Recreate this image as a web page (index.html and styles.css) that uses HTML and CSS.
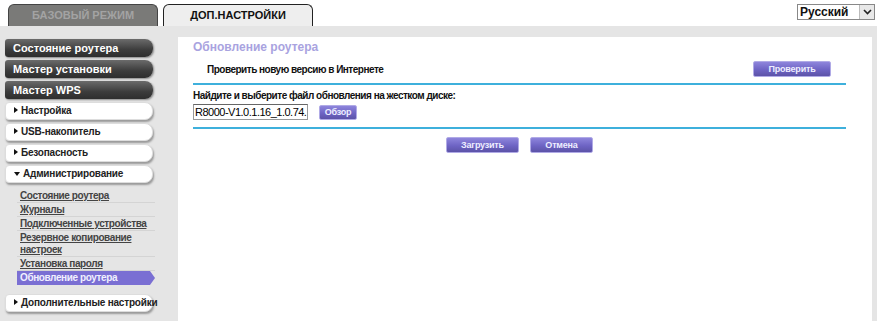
FILE: index.html
```html
<!DOCTYPE html>
<html lang="ru">
<head>
  <meta charset="UTF-8" />
  <title>Обновление роутера</title>
  <link rel="stylesheet" href="styles.css">
</head>
<body>
  <div class="topbar">
    <div class="tabs">
      <div class="tab tab-basic">БАЗОВЫЙ РЕЖИМ</div>
      <div class="tab tab-adv">ДОП.НАСТРОЙКИ</div>
    </div>
    <div class="lang">
      <span class="lang-text">Русский</span>
      <span class="lang-arrow">
        <svg width="9" height="6" viewBox="0 0 9 6"><path d="M1 1 L4.5 4.5 L8 1" fill="none" stroke="#222" stroke-width="1.6"/></svg>
      </span>
    </div>
  </div>

  <div class="main">
    <div class="sidebar">
      <a class="nav-dark">Состояние роутера</a>
      <a class="nav-dark">Мастер установки</a>
      <a class="nav-dark">Мастер WPS</a>
      <a class="nav-light closed">Настройка</a>
      <a class="nav-light closed">USB-накопитель</a>
      <a class="nav-light closed">Безопасность</a>
      <a class="nav-light open">Администрирование</a>

      <ul class="submenu">
        <li><a>Состояние роутера</a></li>
        <li><a>Журналы</a></li>
        <li><a>Подключенные устройства</a></li>
        <li class="two-line"><a>Резервное копирование<br>настроек</a></li>
        <li><a>Установка пароля</a></li>
        <li class="active"><a>Обновление роутера</a></li>
      </ul>

      <a class="nav-light closed extra">Дополнительные настройки</a>
    </div>

    <div class="content">
      <h4 class="title">Обновление роутера</h4>

      <div class="row check-row">
        <span class="check-text">Проверить новую версию в Интернете</span>
        <button class="btn btn-check">Проверить</button>
      </div>

      <div class="row file-row">
        <label class="form-label">Найдите и выберите файл обновления на жестком диске:</label>
        <div class="file-line">
          <div class="file-input">R8000-V1.0.1.16_1.0.74.</div>
          <button class="btn btn-browse">Обзор</button>
        </div>
      </div>

      <div class="actions">
        <button class="btn btn-upload">Загрузить</button>
        <button class="btn btn-cancel">Отмена</button>
      </div>
    </div>
  </div>
</body>
</html>
```

FILE: styles.css
```css
* {
  box-sizing: border-box;
  margin: 0;
  padding: 0;
  font-family: "Liberation Sans", Arial, sans-serif;
}

body {
  background: #fff;
  height: 100vh;
  display: flex;
  flex-direction: column;
  overflow: hidden;
}

/* top tabs */
.topbar {
  height: 26px;
  display: flex;
  justify-content: space-between;
  background: #fff;
}

.tabs {
  display: flex;
  align-items: flex-end;
  gap: 5px;
  padding-left: 8px;
}

.tab {
  width: 150px;
  height: 22px;
  border-radius: 6px 6px 0 0;
  font-size: 11px;
  font-weight: bold;
  text-align: center;
  line-height: 21px;
}

.tab-basic {
  background: #7a7a78;
  border: 1px solid #444;
  border-bottom: none;
  color: #a3a3a3;
}

.tab-adv {
  background: #eeeeee;
  border: 1px solid #222;
  border-bottom: none;
  color: #111;
}

.lang {
  margin: 4px 2px 0 0;
  width: 78px;
  height: 16px;
  border: 1px solid #888;
  display: flex;
  align-items: center;
  justify-content: space-between;
  background: #fff;
}

.lang-text {
  font-size: 12px;
  font-weight: bold;
  padding-left: 2px;
  color: #111;
}

.lang-arrow {
  width: 15px;
  height: 14px;
  background: #e8e8e8;
  border-left: 1px solid #bbb;
  display: flex;
  align-items: center;
  justify-content: center;
}

/* main area */
.main {
  flex: 1;
  display: flex;
  background: #e5e5e5;
}

.sidebar {
  width: 178px;
  flex-shrink: 0;
  padding: 13px 0 0 5px;
}

.nav-dark,
.nav-light {
  display: block;
  width: 148px;
  height: 18px;
  margin-bottom: 3px;
  font-weight: bold;
  line-height: 18px;
  white-space: nowrap;
  cursor: pointer;
}

.nav-dark {
  background: linear-gradient(#6b6b6b, #3c3c3c 60%, #2e2e2e);
  color: #fff;
  font-size: 11px;
  padding-left: 8px;
  border-radius: 3px 8px 8px 3px;
  box-shadow: 1px 1px 2px #888;
}

.nav-light {
  background: #fff;
  color: #222;
  font-size: 10px;
  letter-spacing: -0.2px;
  padding-left: 8px;
  border-radius: 4px 8px 8px 4px;
  box-shadow: 1px 2px 2px #999;
  border: 1px solid #ddd;
  line-height: 16px;
}

.nav-light::before {
  content: "";
  display: inline-block;
  margin-right: 3px;
  vertical-align: 1px;
}

.closed::before {
  border-left: 4px solid #111;
  border-top: 3px solid transparent;
  border-bottom: 3px solid transparent;
}

.open::before {
  border-top: 4px solid #111;
  border-left: 3px solid transparent;
  border-right: 3px solid transparent;
}

.submenu {
  list-style: none;
  margin: 6px 0 0 12px;
  width: 138px;
}

.submenu li {
  border-bottom: 1px solid #d4d4d4;
  padding: 1px 0 0 3px;
  font-size: 10px;
  font-weight: bold;
  letter-spacing: -0.4px;
  line-height: 12px;
  height: 14px;
  white-space: nowrap;
}

.submenu li.two-line {
  height: 26px;
}

.submenu a {
  color: #444;
  text-decoration: underline;
}

.submenu li.active {
  background: #7a6fd3;
  border-bottom: none;
  clip-path: polygon(0 0, calc(100% - 5px) 0, 100% 50%, calc(100% - 5px) 100%, 0 100%);
}

.submenu li.active a {
  color: #f0f0ff;
  text-decoration: none;
}

.extra {
  margin-top: 9px;
}

/* content panel */
.content {
  flex: 1;
  background: #fff;
  margin: 11px 5px 0 0;
  padding: 2px 26px 0 15px;
}

.title {
  font-size: 12px;
  font-weight: bold;
  color: #a9a3df;
  line-height: 16px;
}

.row {
  border-bottom: 2px solid #3eb0dc;
}

.check-row {
  height: 30px;
  display: flex;
  align-items: center;
  justify-content: space-between;
  padding: 0 15px 0 14px;
}

.check-text {
  font-size: 10px;
  font-weight: bold;
  letter-spacing: -0.5px;
  color: #111;
}

.file-row {
  padding-top: 4px;
  height: 44px;
}

.form-label {
  display: block;
  font-size: 10px;
  font-weight: bold;
  letter-spacing: -0.5px;
  color: #111;
  line-height: 14px;
}

.file-line {
  display: flex;
  align-items: center;
  gap: 11px;
  margin-top: 1px;
}

.file-input {
  width: 115px;
  height: 16px;
  border: 1px solid #999;
  border-top-color: #666;
  padding-left: 1px;
  font-size: 11px;
  line-height: 14px;
  letter-spacing: -0.5px;
  color: #000;
  white-space: nowrap;
  overflow: hidden;
}

.btn {
  height: 16px;
  background: linear-gradient(#8e85dc, #6e64c4 55%, #5c53a8);
  border: 1px solid #b0aae6;
  border-radius: 2px;
  color: #eeeeff;
  font-size: 9px;
  font-weight: bold;
  letter-spacing: -0.2px;
  cursor: pointer;
}

.btn-check {
  width: 78px;
}

.btn-browse {
  width: 38px;
  height: 15px;
}

.actions {
  display: flex;
  justify-content: center;
  gap: 11px;
  margin-top: 8px;
}

.btn-upload {
  width: 73px;
}

.btn-cancel {
  width: 63px;
}
```
